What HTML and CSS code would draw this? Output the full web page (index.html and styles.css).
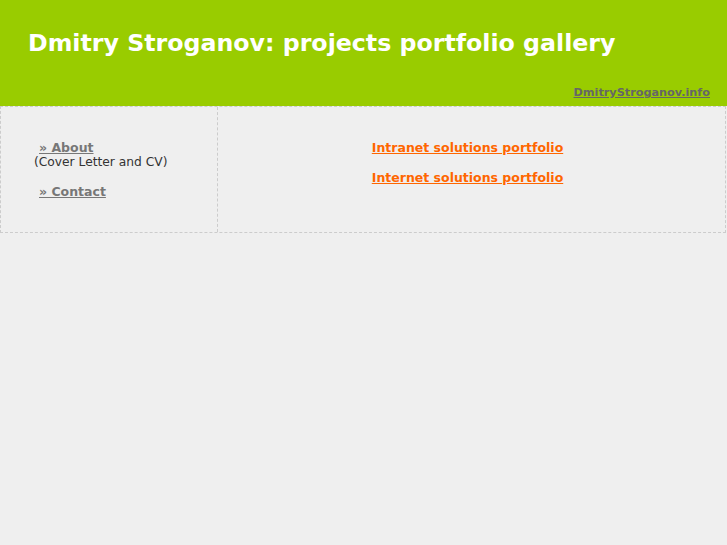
FILE: index.html
```html
<!DOCTYPE html>
<html lang="en">
<head>
<meta charset="utf-8">
<title>Dmitry Stroganov: projects portfolio gallery</title>
<link rel="stylesheet" href="styles.css">
</head>
<body>
<header class="masthead">
  <h1 class="title">Dmitry Stroganov: projects portfolio gallery</h1>
  <div class="site-link-row"><a class="site-link" href="#">DmitryStroganov.info</a></div>
</header>
<div class="layout">
  <nav class="sidebar">
    <div class="nav-item">
      <a class="nav-link" href="#">&raquo; About</a>
      <div class="nav-note">(Cover Letter and CV)</div>
    </div>
    <div class="nav-item">
      <a class="nav-link" href="#">&raquo; Contact</a>
    </div>
  </nav>
  <main class="content">
    <a class="portfolio-link" href="#">Intranet solutions portfolio</a>
    <a class="portfolio-link" href="#">Internet solutions portfolio</a>
  </main>
</div>
</body>
</html>
```
FILE: styles.css
```css
html, body {
  margin: 0;
  padding: 0;
  background: #efefef;
  font-family: "DejaVu Sans", Verdana, sans-serif;
}

/* green banner with the page title and the home link */
.masthead {
  background: #99cc00;
  height: 106px;
  box-sizing: border-box;
  padding: 29px 17px 6px 28px;
  display: flex;
  flex-direction: column;
}

.title {
  margin: 0;
  color: #ffffff;
  font-size: 23.7px;
  font-weight: bold;
  line-height: 28px;
  white-space: nowrap;
}

.site-link-row {
  margin-top: auto;
  text-align: right;
}

.site-link {
  color: #666666;
  font-size: 11.25px;
  font-weight: bold;
  line-height: 14px;
}

/* two-cell box under the banner */
.layout {
  display: flex;
  border: 1px dashed #cccccc;
  height: 127px;
  width: 726px;
  box-sizing: border-box;
}

.sidebar {
  width: 217px;
  flex: none;
  border-right: 1px dashed #cccccc;
  box-sizing: border-box;
  padding: 33px 0 0 33px;
  display: flex;
  flex-direction: column;
  gap: 15px;
}

.nav-item {
  display: flex;
  flex-direction: column;
  align-items: flex-start;
}

.nav-link {
  margin-left: 5px;
  color: #777777;
  font-size: 12.5px;
  font-weight: bold;
  line-height: 15px;
}

.nav-note {
  color: #333333;
  font-size: 12.26px;
  line-height: 14px;
}

.content {
  flex: 1;
  display: flex;
  flex-direction: column;
  align-items: center;
  padding-top: 33px;
  gap: 15px;
}

.portfolio-link {
  color: #ff6600;
  font-size: 12.5px;
  font-weight: bold;
  line-height: 15px;
  margin-right: 8px;
}
```
